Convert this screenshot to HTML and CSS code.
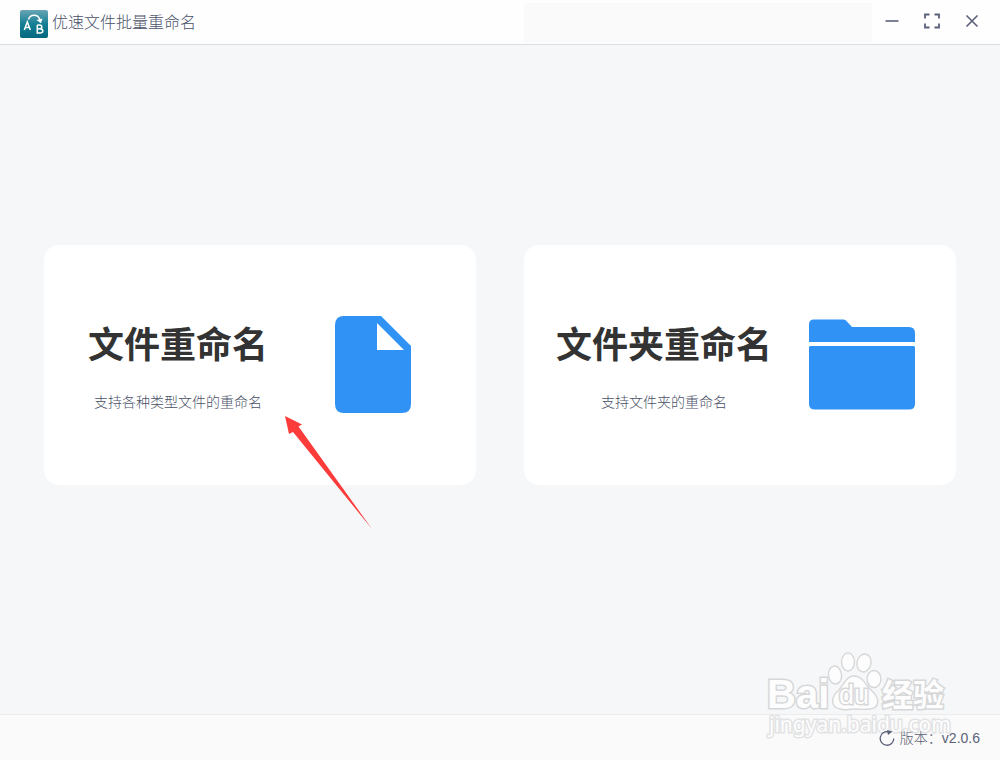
FILE: index.html
```
<!DOCTYPE html>
<html lang="zh-CN">
<head>
  <meta charset="UTF-8">
  <title>优速文件批量重命名</title>
  <link rel="stylesheet" href="styles.css">
</head>
<body>

  <header class="titlebar">
    <svg class="logo" viewBox="0 0 28 28" aria-hidden="true">
      <defs>
        <linearGradient id="logo-bg" x1="0" y1="0" x2="0" y2="1">
          <stop offset="0" stop-color="#68a5b4"/>
          <stop offset="0.5" stop-color="#147f94"/>
          <stop offset="1" stop-color="#04687f"/>
        </linearGradient>
      </defs>
      <rect width="28" height="28" rx="2" fill="url(#logo-bg)"/>
      <g fill="none" stroke="#fff" stroke-width="1.5">
        <path d="M4.300 20L7.300 12L10.300 20M5.200 17.500H9.400"/>
        <path d="M17.300 15V23H20Q22.800 23 22.800 21T20 18.800H17.300M17.300 15H19.600Q21.800 15 21.800 16.900T19.600 18.800"/>
        <path d="M8.500 9.500C10 4 18 3.500 20 10"/>
      </g>
      <path d="M16.500 10L22.500 8.500L21 13.200Z" fill="#fff"/>
    </svg>
    <h1 class="app-name">优速文件批量重命名</h1>
    <div class="drag-area"></div>
    <div class="window-controls">
      <button type="button" aria-label="最小化">
        <svg viewBox="0 0 16 16"><path d="M1.500 8H14.500"/></svg>
      </button>
      <button type="button" aria-label="最大化">
        <svg viewBox="0 0 16 16"><path d="M1 5.500V1.500H5.500M10.500 1.500H15V5.500M15 10.500V14.500H10.500M5.500 14.500H1V10.500" stroke-width="1.800"/></svg>
      </button>
      <button type="button" aria-label="关闭">
        <svg viewBox="0 0 16 16"><path d="M2.500 2.500L13.500 13.500M13.500 2.500L2.500 13.500"/></svg>
      </button>
    </div>
  </header>

  <main class="content">
    <button type="button" class="card">
      <span class="card-text">
        <span class="card-title">文件重命名</span>
        <span class="card-desc">支持各种类型文件的重命名</span>
      </span>
      <svg class="card-icon" viewBox="0 0 120 120" aria-hidden="true">
        <path fill-rule="evenodd" d="M32 11H69L99 41V99Q99 108 90 108H32Q23 108 23 99V20Q23 11 32 11ZM65 18V45H92Z"/>
      </svg>
    </button>

    <button type="button" class="card">
      <span class="card-text">
        <span class="card-title">文件夹重命名</span>
        <span class="card-desc">支持文件夹的重命名</span>
      </span>
      <svg class="card-icon" viewBox="0 0 120 120" aria-hidden="true">
        <path d="M10 14.500H39Q41 14.500 42 15.500L48 22H105Q111 22 111 28V37H5V19.500Q5 14.500 10 14.500Z"/>
        <path d="M6 41H110L111 42V99Q111 104.500 105 104.500H11Q5 104.500 5 99V42Z"/>
      </svg>
    </button>

    <!-- pointer to the first card -->
    <svg class="arrow" viewBox="0 0 88 114" aria-hidden="true">
      <path d="M0 0L17 8.500L13.500 10.500L87 113L8 16L4 18Z"/>
    </svg>
  </main>

  <footer class="statusbar">
    <svg class="refresh" viewBox="0 0 16 16" aria-hidden="true">
      <path d="M9.500 1.800A6.800 6.800 0 1 0 14.800 8.500" fill="none" stroke="#5a6178" stroke-width="1.300"/>
      <path d="M8 0L13.500 1.500L9 5Z" fill="#5a6178"/>
    </svg>
    <span class="version">版本：v2.0.6</span>
  </footer>

  <svg class="watermark" viewBox="0 0 190 92" aria-hidden="true">
    <g class="mark">
      <text class="mark-latin" x="4" y="60">Bai</text>
      <ellipse cx="72" cy="27" rx="6.500" ry="9" transform="rotate(-8 72 27)"/>
      <ellipse cx="85" cy="14" rx="6.500" ry="9"/>
      <ellipse cx="101" cy="15" rx="7" ry="9" transform="rotate(12 101 15)"/>
      <ellipse cx="111" cy="31" rx="7" ry="8.500"/>
      <path d="M91 28C99 28 102 36 109 43C117 50 117 61 106 61C100 62 97 61 91 61C85 61 83 63 77 61C67 59 68 49 75 43C81 37 83 28 91 28Z"/>
      <text class="mark-du" x="76" y="56">du</text>
      <text class="mark-cn" x="119" y="58">经验</text>
      <text class="mark-url" x="6" y="84">jingyan.baidu.com</text>
    </g>
  </svg>

</body>
</html>
```
FILE: styles.css
```
* {
  box-sizing: border-box;
}

body {
  margin: 0;
  min-height: 100vh;
  display: flex;
  flex-direction: column;
  position: relative;
  background-color: #f5f7f9;
  color: #5a6178;
  font-family: "Liberation Sans", "Noto Sans CJK SC", sans-serif;
  font-size: 14px;
}

button {
  border: none;
  background: none;
  padding: 0;
  font: inherit;
  color: inherit;
  cursor: pointer;
}

/* title bar */
.titlebar {
  display: flex;
  align-items: center;
  height: 45px;
  padding: 2px 8px 0 20px;
  background-color: #fefefe;
  border-bottom: 1px solid #dcdddf;
}

.logo {
  width: 28px;
  height: 28px;
  margin-top: 2px;
}

.app-name {
  margin: 0 0 0 4px;
  color: #4a5168;
  font-size: 16px;
  font-weight: 300;
  line-height: 24px;
}

.drag-area {
  width: 348px;
  height: 40px;
  margin-left: auto;
  background-color: #fafafa;
}

.window-controls {
  display: flex;
  align-self: flex-start;
}

.window-controls button {
  width: 40px;
  height: 38px;
  display: flex;
  align-items: center;
  justify-content: center;
}

.window-controls svg {
  width: 16px;
  height: 16px;
  fill: none;
  stroke: #5a6178;
  stroke-width: 1.6;
}

/* cards */
.content {
  position: relative;
  flex: 1;
  display: flex;
  align-items: flex-start;
  gap: 48px;
  padding: 200px 44px 40px;
}

.card {
  flex: 1;
  height: 240px;
  display: flex;
  align-items: center;
  justify-content: space-evenly;
  background-color: #fff;
  border-radius: 15px;
}

.card-text {
  display: flex;
  flex-direction: column;
  align-items: center;
  gap: 20px;
  padding-top: 2px;
}

.card-title {
  color: #333;
  font-size: 36px;
  font-weight: 700;
  line-height: 52px;
}

.card-desc {
  color: #4a5168;
  font-size: 14px;
  font-weight: 300;
  line-height: 20px;
}

.card-icon {
  width: 120px;
  height: 120px;
  fill: #3192f6;
}

.arrow {
  position: absolute;
  left: 285px;
  top: 371px;
  width: 88px;
  height: 114px;
  fill: #fc3c3a;
}

/* bottom bar */
.statusbar {
  display: flex;
  align-items: center;
  justify-content: flex-end;
  gap: 5px;
  height: 46px;
  padding-right: 20px;
  background-color: #fafafa;
  border-top: 1px solid #ebecee;
}

.refresh,
.version {
  position: relative;
  z-index: 2;
}

.refresh {
  width: 16px;
  height: 16px;
}

.version {
  font-weight: 300;
  line-height: 20px;
}

/* watermark */
.watermark {
  position: absolute;
  right: 47px;
  bottom: 20px;
  width: 190px;
  height: 92px;
  pointer-events: none;
}

.mark {
  fill: #fdfdfd;
  stroke: #d6d7d8;
  stroke-width: 1.4;
}

.mark text {
  paint-order: stroke;
  stroke-width: 3;
}

.mark-latin {
  font-size: 40px;
  font-weight: 700;
}

.mark-du {
  font-size: 27px;
}

.mark-cn {
  font-family: "Noto Sans CJK SC", sans-serif;
  font-size: 31px;
  font-weight: 700;
}

.mark .mark-url {
  font-family: "Noto Sans", sans-serif;
  font-size: 21px;
  stroke: #e2e3e4;
}
```
